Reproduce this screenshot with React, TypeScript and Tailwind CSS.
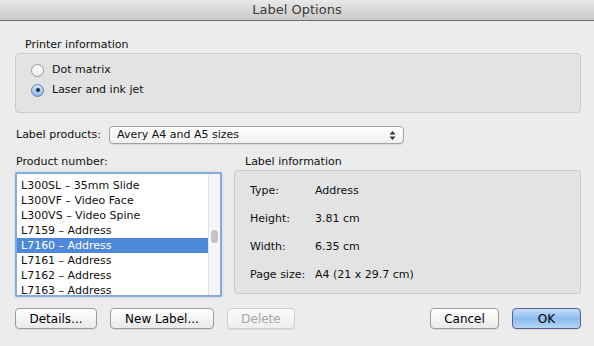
import React, { useState } from 'react';

const products = [
  'L300SL – 35mm Slide',
  'L300VF – Video Face',
  'L300VS – Video Spine',
  'L7159 – Address',
  'L7160 – Address',
  'L7161 – Address',
  'L7162 – Address',
  'L7163 – Address',
];

const info = [
  { label: 'Type:', value: 'Address' },
  { label: 'Height:', value: '3.81 cm' },
  { label: 'Width:', value: '6.35 cm' },
  { label: 'Page size:', value: 'A4 (21 x 29.7 cm)' },
];

const Radio: React.FC<{ checked: boolean; label: string; onClick: () => void }> = ({ checked, label, onClick }) => (
  <div className="flex items-center h-[20px] cursor-default" onClick={onClick}>
    {checked ? (
      <span className="w-[13px] h-[13px] rounded-full border border-[#5b7fae] bg-gradient-to-b from-[#d7e8fb] to-[#86b6ec] flex items-center justify-center">
        <span className="w-[4px] h-[4px] rounded-full bg-[#1b2a3d]" />
      </span>
    ) : (
      <span className="w-[13px] h-[13px] rounded-full border border-[#9a9a9a] bg-gradient-to-b from-[#ffffff] to-[#ececec]" />
    )}
    <span className="ml-[8px]">{label}</span>
  </div>
);

const Button: React.FC<{ label: string; width: string; disabled?: boolean; primary?: boolean }> = ({
  label,
  width,
  disabled,
  primary,
}) => {
  let cls = 'border-[#9b9b9b] bg-gradient-to-b from-[#ffffff] to-[#e9e9e9] text-black';
  if (primary) cls = 'border-[#5a5f98] bg-gradient-to-b from-[#c6def7] via-[#8dbcef] to-[#b5d6f6] text-black';
  if (disabled) cls = 'border-[#d0d0d0] bg-gradient-to-b from-[#fafafa] to-[#efefef] text-[#a5a5a5]';
  return (
    <button
      className={`${width} h-[21px] rounded-[4px] border ${cls} flex items-center justify-center text-[12px] leading-none shadow-[0_1px_0_rgba(0,0,0,0.08)]`}
    >
      {label}
    </button>
  );
};

export default function App() {
  const [printer, setPrinter] = useState('laser');
  const [selected, setSelected] = useState(4);

  return (
    <div
      className="w-[594px] h-[346px] bg-[#ececec] text-[11px] text-[#111] overflow-hidden"
      style={{ fontFamily: '"DejaVu Sans", sans-serif' }}
    >
      {/* Title bar */}
      <div className="h-[21px] border-b border-[#6e6e6e] bg-gradient-to-b from-[#e9e9e9] to-[#c9c9c9] flex items-center justify-center text-[13px] text-[#3b3b3b]">
        Label Options
      </div>

      <div className="pl-[15px] pr-[13px]">
        {/* Printer information */}
        <div className="pt-[16px] pl-[10px] leading-[15px]">Printer information</div>
        <div className="mt-[1px] h-[60px] rounded-[4px] border border-[#cbcbcb] bg-[#e3e3e3] pl-[15px] pt-[6px]">
          <Radio checked={printer === 'dot'} label="Dot matrix" onClick={() => setPrinter('dot')} />
          <Radio checked={printer === 'laser'} label="Laser and ink jet" onClick={() => setPrinter('laser')} />
        </div>

        {/* Label products */}
        <div className="mt-[13px] flex items-center h-[18px]">
          <span className="w-[94px] pl-[1px]">Label products:</span>
          <div className="w-[295px] h-[18px] rounded-[4px] border border-[#a3a3a3] bg-gradient-to-b from-[#ffffff] to-[#f0f0f0] flex items-center justify-between pl-[7px] pr-[7px] shadow-[0_1px_0_rgba(0,0,0,0.08)]">
            <span>Avery A4 and A5 sizes</span>
            <svg width="7" height="11" viewBox="0 0 7 11">
              <path d="M3.5 1 L6.5 4.5 L0.5 4.5 Z" fill="#333" />
              <path d="M3.5 10 L6.5 6.5 L0.5 6.5 Z" fill="#333" />
            </svg>
          </div>
        </div>

        <div className="mt-[10px] flex gap-[12px]">
          {/* Product number */}
          <div className="w-[207px]">
            <div className="leading-[15px] pl-[1px]">Product number:</div>
            <div className="mt-[3px] h-[125px] rounded-[2px] border-2 border-[#85abdd] shadow-[0_0_2px_#9cc0ea] bg-white flex overflow-hidden">
              <div className="flex-1 pt-[4px]">
                {products.map((p, i) => (
                  <div
                    key={p}
                    onClick={() => setSelected(i)}
                    className={`h-[15px] leading-[15px] pl-[4px] whitespace-nowrap ${
                      i === selected ? 'bg-[#4d88da] text-white' : ''
                    }`}
                  >
                    {p}
                  </div>
                ))}
              </div>
              <div className="w-[12px] bg-[#f6f6f6] border-l border-[#e4e4e4] relative">
                <div className="absolute left-[2px] top-[56px] w-[7px] h-[13px] rounded-full bg-[#c3c3c3]" />
              </div>
            </div>
          </div>

          {/* Label information */}
          <div className="flex-1">
            <div className="leading-[15px] pl-[11px]">Label information</div>
            <div className="mt-[1px] h-[124px] rounded-[4px] border border-[#cbcbcb] bg-[#e3e3e3] pl-[15px] pt-[12px]">
              {info.map((r) => (
                <div key={r.label} className="flex h-[28px] leading-[15px]">
                  <span className="w-[65px]">{r.label}</span>
                  <span>{r.value}</span>
                </div>
              ))}
            </div>
          </div>
        </div>

        {/* Buttons */}
        <div className="mt-[11px] flex items-center">
          <Button label="Details..." width="w-[82px]" />
          <div className="w-[13px]" />
          <Button label="New Label..." width="w-[104px]" />
          <div className="w-[13px]" />
          <Button label="Delete" width="w-[68px]" disabled />
          <div className="flex-1" />
          <Button label="Cancel" width="w-[69px]" />
          <div className="w-[13px]" />
          <Button label="OK" width="w-[69px]" primary />
        </div>
      </div>
    </div>
  );
}
